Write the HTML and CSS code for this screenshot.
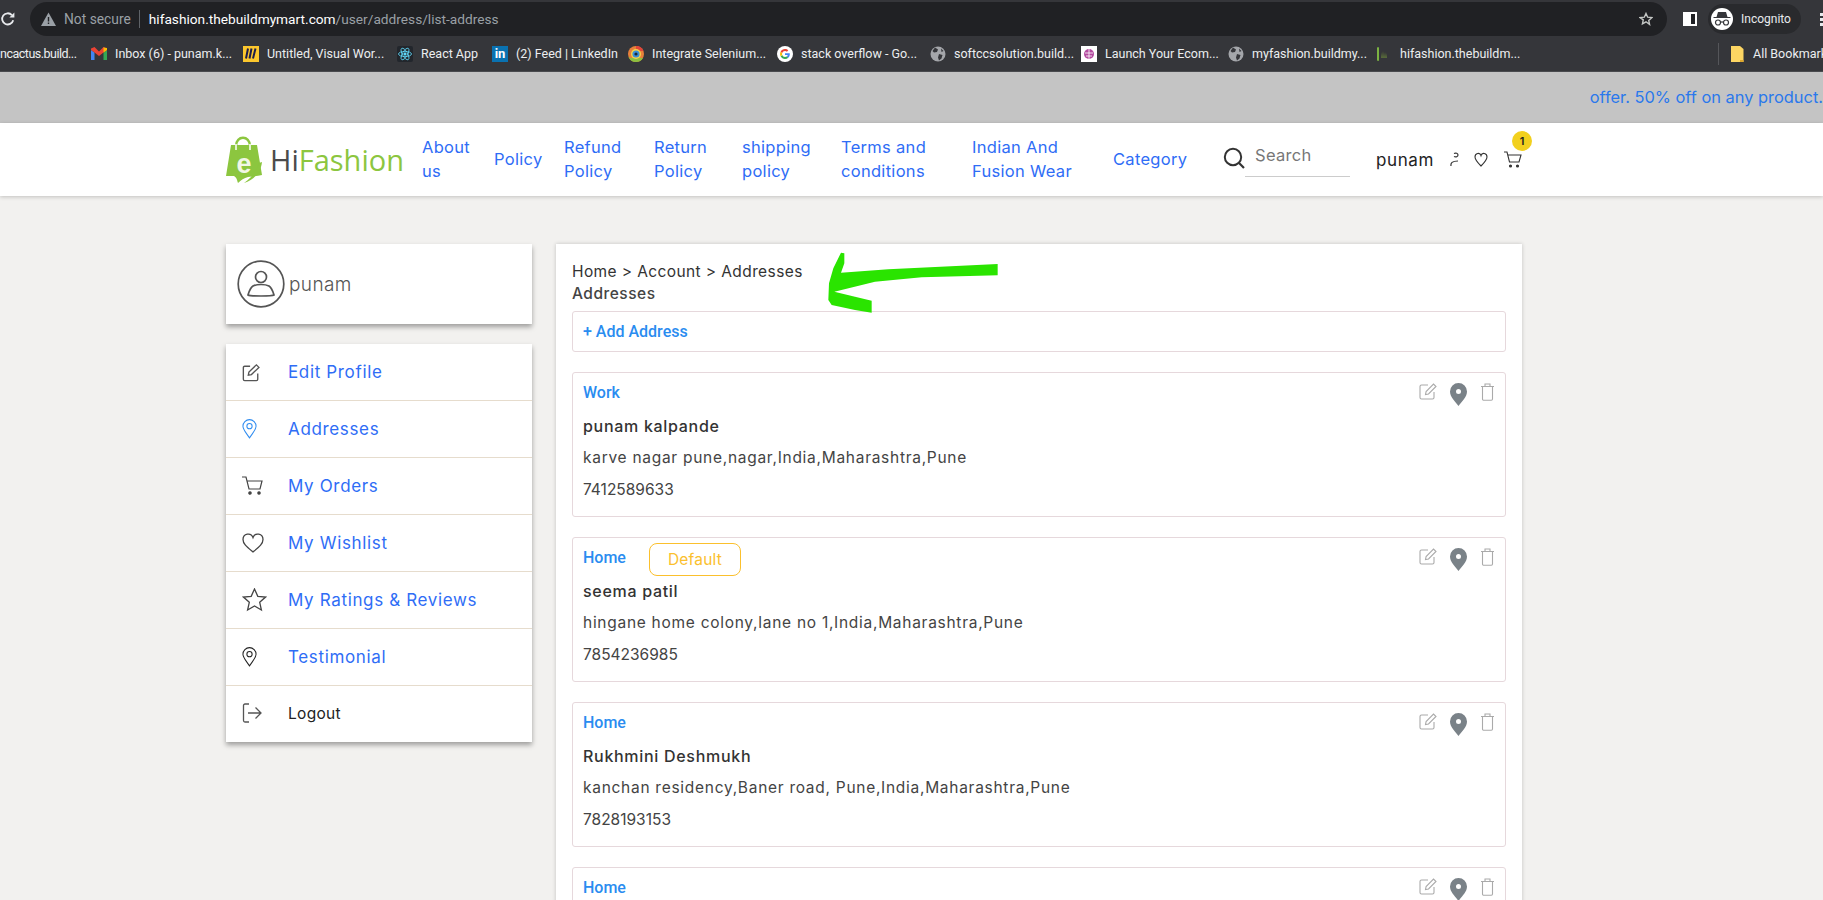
FILE: index.html
```html
<!DOCTYPE html>
<html lang="en">
<head>
    <meta charset="UTF-8">
    <meta name="viewport" content="width=device-width, initial-scale=1.0">
    <title>Addresses</title>
    <link rel="stylesheet" href="styles.css">
</head>
<body>
    <div class="browser-toolbar">
        <svg class="reload-icon" width="16" height="16" viewBox="0 0 16 16"><path d="M13.2 9.2a5.6 5.6 0 1 1-1.3-5.1" fill="none" stroke="#e8eaed" stroke-width="1.8"/><path d="M14.4 1.6v5h-5z" fill="#e8eaed"/></svg>
        <div class="omnibox">
            <svg class="warn-icon" width="15" height="14" viewBox="0 0 15 14"><path d="M7.5 0.5 15 14H0z" fill="#9aa0a6"/><path d="M6.8 5h1.4v4.6H6.8zM6.8 10.6h1.4V12H6.8z" fill="#202124"/></svg>
            <span class="not-secure">Not secure</span>
            <span class="omni-divider"></span>
            <span class="url"><b>hifashion.thebuildmymart.com</b>/user/address/list-address</span>
            <svg class="star-icon" width="14" height="14" viewBox="0 0 24 24"><path d="M12 2.5l2.9 6.4 7 .8-5.200 4.700 1.400 6.900L12 16.800l-6.100 3.500 1.400-6.900L2.100 9.700l7-.8z" fill="none" stroke="#c4c7c5" stroke-width="2.400"/></svg>
        </div>
        <span class="side-panel-icon"></span>
        <div class="incognito-pill">
            <span class="incognito-avatar">
                <svg width="18" height="14" viewBox="0 0 18 14"><path d="M5 0h8l1.500 5h3v1H.5V5h3z" fill="#35363a"/><circle cx="5" cy="10.500" r="2.500" fill="none" stroke="#35363a" stroke-width="1.200"/><circle cx="13" cy="10.500" r="2.500" fill="none" stroke="#35363a" stroke-width="1.200"/><path d="M7.500 10h3" stroke="#35363a" stroke-width="1.200"/></svg>
            </span>
            <span>Incognito</span>
        </div>
        <span class="menu-dots"><i></i><i></i><i></i></span>
    </div>

    <div class="bookmarks">
        <div class="bookmark bookmark-first">ncactus.build...</div>
        <div class="bookmark">
            <svg width="16" height="13" viewBox="0 0 16 13"><path d="M0 3v10h3.500V5.500z" fill="#4285f4"/><path d="M16 3v10h-3.500V5.500z" fill="#34a853"/><path d="M0 1.500 3.500 0 8 4.500 12.500 0 16 1.500V3L12.500 5.500 8 9 3.500 5.500 0 3z" fill="#ea4335"/><path d="M12.500 .5 16 1v2l-3.500 2.500z" fill="#fbbc04"/></svg>
            Inbox (6) - punam.k...
        </div>
        <div class="bookmark">
            <span class="favicon favicon-miro"><svg width="12" height="11" viewBox="0 0 12 11"><path d="M3 0.500 1 10.500M6.500 0.500 4.500 10.500M10.500 0.500 8 10.500" stroke="#1c1c4c" stroke-width="2" fill="none"/></svg></span>
            Untitled, Visual Wor...
        </div>
        <div class="bookmark">
            <span class="favicon favicon-react"><svg width="14" height="14" viewBox="0 0 14 14" fill="none" stroke="#61dafb" stroke-width=".8"><ellipse cx="7" cy="7" rx="6.500" ry="2.600"/><ellipse cx="7" cy="7" rx="6.500" ry="2.600" transform="rotate(60 7 7)"/><ellipse cx="7" cy="7" rx="6.500" ry="2.600" transform="rotate(120 7 7)"/><circle cx="7" cy="7" r="1.200" fill="#61dafb"/></svg></span>
            React App
        </div>
        <div class="bookmark">
            <span class="favicon favicon-linkedin">in</span>
            (2) Feed | LinkedIn
        </div>
        <div class="bookmark">
            <svg width="16" height="16" viewBox="0 0 16 16"><circle cx="8" cy="8" r="8" fill="#e8803a"/><path d="M8 0a8 8 0 0 1 7.500 5H8z" fill="#e0453a"/><path d="M0.500 11A8 8 0 0 0 8 16a8 8 0 0 0 7-4H3z" fill="#8cbf3f"/><circle cx="8" cy="8" r="5" fill="#f3d34a"/><circle cx="8" cy="8" r="3.600" fill="#3a8fd8"/><circle cx="8" cy="8" r="1.600" fill="#1c2b3a"/></svg>
            Integrate Selenium...
        </div>
        <div class="bookmark">
            <svg width="16" height="16" viewBox="0 0 16 16"><circle cx="8" cy="8" r="8" fill="#fff"/><path d="M12.800 8.200c0-.4 0-.7-.1-1H8v1.900h2.700c-.1.700-.5 1.200-1 1.500l1.600 1.200c.9-.9 1.500-2.100 1.500-3.600z" fill="#4285f4"/><path d="M8 13c1.300 0 2.400-.4 3.300-1.200l-1.600-1.200c-.4.300-1 .5-1.700.5-1.300 0-2.400-.9-2.800-2L3.600 10.300C4.400 11.900 6.100 13 8 13z" fill="#34a853"/><path d="M5.200 9.100c-.2-.7-.2-1.500 0-2.200L3.600 5.700c-.7 1.400-.7 3.200 0 4.600z" fill="#fbbc04"/><path d="M8 5c.7 0 1.400.3 1.900.7l1.400-1.400C10.400 3.500 9.300 3 8 3 6.100 3 4.400 4.100 3.600 5.700l1.600 1.200C5.600 5.800 6.700 5 8 5z" fill="#ea4335"/></svg>
            stack overflow - Go...
        </div>
        <div class="bookmark">
            <svg width="16" height="16" viewBox="0 0 16 16"><circle cx="8" cy="8" r="7.500" fill="#a4a6aa"/><path d="M5 1.500 8 3.500 7 6 4 6.500 2.500 5zM9 8l3.500 1-1 3.500-2.500 2-1-3zM11 2.500l2.500 2.500-2 1z" fill="#35363a"/></svg>
            softccsolution.build...
        </div>
        <div class="bookmark">
            <span class="favicon favicon-launch"><svg width="12" height="12" viewBox="0 0 12 12"><circle cx="6" cy="6" r="5" fill="#b44aa0"/><path d="M2 5h8M3 8h6M6 1v10" stroke="#fff" stroke-width=".8"/></svg></span>
            Launch Your Ecom...
        </div>
        <div class="bookmark">
            <svg width="16" height="16" viewBox="0 0 16 16"><circle cx="8" cy="8" r="7.500" fill="#a4a6aa"/><path d="M5 1.500 8 3.500 7 6 4 6.500 2.500 5zM9 8l3.500 1-1 3.500-2.500 2-1-3zM11 2.500l2.500 2.500-2 1z" fill="#35363a"/></svg>
            myfashion.buildmy...
        </div>
        <div class="bookmark bookmark-last">
            <svg width="16" height="16" viewBox="0 0 16 16"><path d="M1 1.500c1-.5 1.500-.5 2 0v13c-.5.5-1 .5-2 0z" fill="#7cb342"/><path d="M5 6l1 5 1-6 1 6 1-5 1 5 1-4v5H5z" fill="#55663a"/></svg>
            hifashion.thebuildm...
        </div>
        <div class="bookmarks-end">
            <svg width="13" height="16" viewBox="0 0 13 16"><path d="M0 0h9l3.500 3v13H0z" fill="#fdd663"/><path d="M9 14h3.500v2H9z" fill="#e0a92e"/></svg>
            All Bookmarks
        </div>
    </div>

    <div class="offer-bar">offer. 50% off on any product.</div>

    <header class="site-header">
        <a class="logo" href="#">
            <svg width="37" height="48" viewBox="0 0 37 48">
                <path d="M10 10C10 -1 24 -1 24 10" fill="none" stroke="#8cc63f" stroke-width="2.400"/>
                <path d="M5 9h26l5 30c-4 1-9 1-14 2-4 1-7 3-10 6-1-3-1-5-4-7l-8 0z" fill="#8cc63f"/>
                <path d="M10 8v6M24 8v6" stroke="#fff" stroke-width="1.500"/>
                <path d="M36 26C35 36 28 44 18 47 25 42 30 36 33 27z" fill="#8cc63f"/>
                <text x="18" y="37" class="logo-e">e</text>
            </svg>
            <span class="logo-text"><span class="logo-hi">Hi</span>Fashion</span>
        </a>
        <nav class="main-nav">
            <a class="nav-about" href="#">About us</a>
            <a class="nav-policy" href="#">Policy</a>
            <a class="nav-refund" href="#">Refund Policy</a>
            <a class="nav-return" href="#">Return Policy</a>
            <a class="nav-shipping" href="#">shipping policy</a>
            <a class="nav-terms" href="#">Terms and conditions</a>
            <a class="nav-indian" href="#">Indian And Fusion Wear</a>
            <a class="nav-category" href="#">Category</a>
        </nav>
        <svg class="search-icon" width="22" height="22" viewBox="0 0 22 22"><circle cx="10" cy="10" r="8.200" fill="none" stroke="#333" stroke-width="2"/><path d="M15.800 15.800 21 21" stroke="#333" stroke-width="2.200"/></svg>
        <div class="search-box">Search</div>
        <span class="header-user">punam</span>
        <svg class="mini-user" width="9" height="15" viewBox="0 0 9 15" fill="none" stroke="#333" stroke-width="1.200"><path d="M4 1.500c2-1 4 0 4 1.500s-2 2.500-4 1.500"/><path d="M1 14c-.5-3 1-5 7-5"/></svg>
        <svg class="mini-heart" width="14" height="15" viewBox="0 0 14 15"><path d="M7 14C3 10 1 8 1 5c0-4 5-5 6-1.500C8 0 13 1 13 5c0 3-2 5-6 9z" fill="none" stroke="#333" stroke-width="1.100"/></svg>
        <span class="cart-wrap">
            <svg width="18" height="19" viewBox="0 0 18 19" fill="none" stroke="#333" stroke-width="1.100"><path d="M0 2h3l2.500 10h9.500L17 5H4"/><circle cx="6.500" cy="16" r="1" fill="#333"/><circle cx="13.500" cy="16" r="1" fill="#333"/></svg>
            <span class="cart-badge">1</span>
        </span>
    </header>

    <main class="account-page">
        <aside class="sidebar">
            <div class="profile-card">
                <svg width="48" height="48" viewBox="0 0 48 48" fill="none" stroke="#555" stroke-width="1.700">
                    <circle cx="24" cy="24" r="22.800"/>
                    <circle cx="24" cy="17" r="5.500"/>
                    <path d="M16 26c4-2 12-2 16 0 3 2 4 6 5 9-2 1.300-24 1.300-26 0 1-3 2-7 5-9z"/>
                </svg>
                <span>punam</span>
            </div>
            <ul class="side-menu">
                <li>
                    <svg width="18" height="19" viewBox="0 0 20 20" fill="none" stroke="#555" stroke-width="1.500"><path d="M9 3H3a1.500 1.500 0 0 0-1.500 1.500v13A1.500 1.500 0 0 0 3 19h13a1.500 1.500 0 0 0 1.500-1.500V11"/><path d="M7 13l.7-3.500L16 1.500l2.800 2.800-8.300 8z"/></svg>
                    <a href="#">Edit Profile</a>
                </li>
                <li>
                    <svg width="15" height="20" viewBox="1 0 16 21" fill="none" stroke="#2f8cf0" stroke-width="1.100"><path d="M9 20C5 14 2 11 2 7.500a7 7 0 0 1 14 0C16 11 13 14 9 20z"/><circle cx="9" cy="7.500" r="2.800"/></svg>
                    <a href="#">Addresses</a>
                </li>
                <li>
                    <svg width="22" height="20" viewBox="0 0 22 20" fill="none" stroke="#444" stroke-width="1.200"><path d="M0 1h4l3 12h11l2-8H5"/><circle cx="8" cy="17" r="1.200" fill="#444"/><circle cx="17" cy="17" r="1.200" fill="#444"/></svg>
                    <a href="#">My Orders</a>
                </li>
                <li>
                    <svg width="22" height="20" viewBox="0 0 22 20" fill="none" stroke="#444" stroke-width="1.300"><path d="M11 19C5 14 1 11 1 6.500 1 .5 9-1 11 4.500 13-1 21 .5 21 6.500 21 11 17 14 11 19z"/></svg>
                    <a href="#">My Wishlist</a>
                </li>
                <li>
                    <svg width="25" height="24" viewBox="0 0 25 24" fill="none" stroke="#444" stroke-width="1.300"><path d="M12.500 1l3.300 7.300 7.700.8-5.800 5.200 1.700 7.700-6.900-4-6.900 4 1.700-7.700L1.500 9.100l7.700-.8z"/></svg>
                    <a href="#">My Ratings &amp; Reviews</a>
                </li>
                <li>
                    <svg width="15" height="20" viewBox="1 0 16 21" fill="none" stroke="#222" stroke-width="1.100"><path d="M9 20C5 14 2 11 2 7.500a7 7 0 0 1 14 0C16 11 13 14 9 20z"/><circle cx="9" cy="7.500" r="2.800"/></svg>
                    <a href="#">Testimonial</a>
                </li>
                <li class="logout">
                    <svg width="20" height="20" viewBox="0 0 20 20" fill="none" stroke="#555" stroke-width="1.300"><path d="M7 1H3a1.500 1.500 0 0 0-1.500 1.500v15A1.500 1.500 0 0 0 3 19h4"/><path d="M6 10h13M13.500 4.500 19 10l-5.500 5.500"/></svg>
                    <a href="#">Logout</a>
                </li>
            </ul>
        </aside>

        <section class="address-panel">
            <svg class="scribble-arrow" width="180" height="70" viewBox="810 30 540 210"><path d="M858 38 868 40 868 70 858 98 1000 88 1328 72 1328 106 1100 112 960 125 838 155 900 170 950 182 950 218 900 210 830 195 820 180 822 130 835 85z" fill="#2ae400"/></svg>
            <div class="breadcrumb">Home &gt; Account &gt; Addresses</div>
            <h2 class="panel-title">Addresses</h2>
            <a class="add-address" href="#">+ Add Address</a>

            <article class="address-card">
                <div class="card-head"><span class="address-type">Work</span></div>
                <div class="card-actions">
                    <svg width="18" height="18" viewBox="0 0 18 18" fill="none" stroke="#aaa" stroke-width="1.100"><path d="M9 2H2.500A1.500 1.500 0 0 0 1 3.500v11A1.500 1.500 0 0 0 2.500 16h11a1.500 1.500 0 0 0 1.500-1.500V9"/><path d="M6.500 11.500l.6-3L14.500 1 17 3.500 9.500 11z"/></svg>
                    <svg width="17" height="23" viewBox="0 0 17 23"><path fill-rule="evenodd" d="M8.500 0a8.500 8.500 0 0 1 8.500 8.500C17 14 12 18 8.500 23 5 18 0 14 0 8.500A8.500 8.500 0 0 1 8.500 0zm0 6a2.500 2.500 0 1 0 0 5 2.500 2.500 0 0 0 0-5z" fill="#7a8288"/></svg>
                    <svg width="15" height="18" viewBox="0 0 15 18" fill="none" stroke="#aaa" stroke-width="1.100"><path d="M1 3.500h13M5 3.500V1h5v2.500M2.500 3.500V16a1.200 1.200 0 0 0 1.200 1.200h7.600a1.200 1.200 0 0 0 1.200-1.200V3.500"/></svg>
                </div>
                <div class="person-name">punam kalpande</div>
                <div class="address-line">karve nagar pune,nagar,India,Maharashtra,Pune</div>
                <div class="phone-line">7412589633</div>
            </article>

            <article class="address-card">
                <div class="card-head"><span class="address-type">Home</span><span class="default-badge">Default</span></div>
                <div class="card-actions">
                    <svg width="18" height="18" viewBox="0 0 18 18" fill="none" stroke="#aaa" stroke-width="1.100"><path d="M9 2H2.500A1.500 1.500 0 0 0 1 3.500v11A1.500 1.500 0 0 0 2.500 16h11a1.500 1.500 0 0 0 1.500-1.500V9"/><path d="M6.500 11.500l.6-3L14.500 1 17 3.500 9.500 11z"/></svg>
                    <svg width="17" height="23" viewBox="0 0 17 23"><path fill-rule="evenodd" d="M8.500 0a8.500 8.500 0 0 1 8.500 8.500C17 14 12 18 8.500 23 5 18 0 14 0 8.500A8.500 8.500 0 0 1 8.500 0zm0 6a2.500 2.500 0 1 0 0 5 2.500 2.500 0 0 0 0-5z" fill="#7a8288"/></svg>
                    <svg width="15" height="18" viewBox="0 0 15 18" fill="none" stroke="#aaa" stroke-width="1.100"><path d="M1 3.500h13M5 3.500V1h5v2.500M2.500 3.500V16a1.200 1.200 0 0 0 1.200 1.200h7.600a1.200 1.200 0 0 0 1.200-1.200V3.500"/></svg>
                </div>
                <div class="person-name">seema patil</div>
                <div class="address-line">hingane home colony,lane no 1,India,Maharashtra,Pune</div>
                <div class="phone-line">7854236985</div>
            </article>

            <article class="address-card">
                <div class="card-head"><span class="address-type">Home</span></div>
                <div class="card-actions">
                    <svg width="18" height="18" viewBox="0 0 18 18" fill="none" stroke="#aaa" stroke-width="1.100"><path d="M9 2H2.500A1.500 1.500 0 0 0 1 3.500v11A1.500 1.500 0 0 0 2.500 16h11a1.500 1.500 0 0 0 1.500-1.500V9"/><path d="M6.500 11.500l.6-3L14.500 1 17 3.500 9.500 11z"/></svg>
                    <svg width="17" height="23" viewBox="0 0 17 23"><path fill-rule="evenodd" d="M8.500 0a8.500 8.500 0 0 1 8.500 8.500C17 14 12 18 8.500 23 5 18 0 14 0 8.500A8.500 8.500 0 0 1 8.500 0zm0 6a2.500 2.500 0 1 0 0 5 2.500 2.500 0 0 0 0-5z" fill="#7a8288"/></svg>
                    <svg width="15" height="18" viewBox="0 0 15 18" fill="none" stroke="#aaa" stroke-width="1.100"><path d="M1 3.500h13M5 3.500V1h5v2.500M2.500 3.500V16a1.200 1.200 0 0 0 1.200 1.200h7.600a1.200 1.200 0 0 0 1.200-1.200V3.500"/></svg>
                </div>
                <div class="person-name">Rukhmini Deshmukh</div>
                <div class="address-line">kanchan residency,Baner road, Pune,India,Maharashtra,Pune</div>
                <div class="phone-line">7828193153</div>
            </article>

            <article class="address-card">
                <div class="card-head"><span class="address-type">Home</span></div>
                <div class="card-actions">
                    <svg width="18" height="18" viewBox="0 0 18 18" fill="none" stroke="#aaa" stroke-width="1.100"><path d="M9 2H2.500A1.500 1.500 0 0 0 1 3.500v11A1.500 1.500 0 0 0 2.500 16h11a1.500 1.500 0 0 0 1.500-1.500V9"/><path d="M6.500 11.500l.6-3L14.500 1 17 3.500 9.500 11z"/></svg>
                    <svg width="17" height="23" viewBox="0 0 17 23"><path fill-rule="evenodd" d="M8.500 0a8.500 8.500 0 0 1 8.500 8.500C17 14 12 18 8.500 23 5 18 0 14 0 8.500A8.500 8.500 0 0 1 8.500 0zm0 6a2.500 2.500 0 1 0 0 5 2.500 2.500 0 0 0 0-5z" fill="#7a8288"/></svg>
                    <svg width="15" height="18" viewBox="0 0 15 18" fill="none" stroke="#aaa" stroke-width="1.100"><path d="M1 3.500h13M5 3.500V1h5v2.500M2.500 3.500V16a1.200 1.200 0 0 0 1.200 1.200h7.600a1.200 1.200 0 0 0 1.200-1.200V3.500"/></svg>
                </div>
            </article>
        </section>
    </main>
</body>
</html>
```

FILE: styles.css
```css
html, body {
    height: 900px;
    overflow: hidden;
}
body {
    font-family: Inter, "Liberation Sans", sans-serif;
    margin: 0;
    padding: 0;
    background: #f2f1ef;
    color: #333;
}
a {
    text-decoration: none;
    color: inherit;
}

/* browser chrome */
.browser-toolbar {
    display: flex;
    align-items: center;
    box-sizing: border-box;
    height: 36px;
    padding-top: 2px;
    background: #35363a;
    color: #e8eaed;
    font-family: "Noto Sans", sans-serif;
    font-size: 12px;
}
.reload-icon {
    flex: none;
    margin-right: 14px;
}
.omnibox {
    display: flex;
    align-items: center;
    box-sizing: border-box;
    width: 1637px;
    height: 34px;
    padding: 0 14px 0 11px;
    border-radius: 17px;
    background: #202124;
    font-family: Roboto, sans-serif;
    font-size: 14px;
}
.not-secure {
    margin-left: 8px;
    color: #9aa0a6;
    font-size: 13.8px;
}
.omni-divider {
    width: 1px;
    height: 18px;
    margin: 0 9px 0 8px;
    background: #5f6368;
}
.url {
    flex: 1;
    color: #9aa0a6;
    font-size: 13.7px;
}
.url b {
    font-weight: 400;
    color: #fff;
}
.side-panel-icon {
    box-sizing: border-box;
    width: 14px;
    height: 14px;
    margin-left: 16px;
    border: 2px solid #fff;
    border-left-width: 8px;
    background: #202124;
}
.incognito-pill {
    display: flex;
    align-items: center;
    gap: 8px;
    box-sizing: border-box;
    width: 93px;
    height: 30px;
    margin-left: 11px;
    padding-left: 3px;
    border-radius: 15px;
    background: #292a2d;
    font-family: Roboto, sans-serif;
}
.incognito-avatar {
    display: flex;
    align-items: center;
    justify-content: center;
    width: 22px;
    height: 22px;
    border-radius: 50%;
    background: #fff;
}
.menu-dots {
    display: flex;
    flex-direction: column;
    gap: 2px;
    margin-left: 19px;
}
.menu-dots i {
    width: 3px;
    height: 3px;
    background: #e8eaed;
}

.bookmarks {
    display: grid;
    grid-template-columns: 91px 152px 154px 95px 136px 149px 153px 151px 147px 148px 342px 1fr;
    align-items: center;
    box-sizing: border-box;
    height: 36px;
    border-bottom: 1px solid #4a4b4f;
    background: #35363a;
    color: #eceef0;
    font-family: Roboto, sans-serif;
    font-size: 12.5px;
    white-space: nowrap;
    overflow: hidden;
}
.bookmark {
    display: flex;
    align-items: center;
    gap: 8px;
}
.bookmark-first {
    letter-spacing: -0.5px;
}
.bookmarks-end {
    display: flex;
    align-items: center;
    gap: 9px;
    height: 22px;
    padding-left: 12px;
    border-left: 1px solid #55565a;
}
.favicon {
    display: flex;
    align-items: center;
    justify-content: center;
    flex: none;
    width: 16px;
    height: 16px;
}
.favicon-miro {
    background: #fcc72d;
}
.favicon-react {
    background: #22262c;
    border-radius: 2px;
}
.favicon-linkedin {
    background: #0a72b1;
    color: #fff;
    font-size: 13px;
    font-weight: 700;
}
.favicon-launch {
    background: #fff;
}

/* site header */
.offer-bar {
    display: flex;
    align-items: center;
    justify-content: flex-end;
    box-sizing: border-box;
    height: 51px;
    padding-bottom: 2px;
    background: #c4c4c4;
    color: #2a78ec;
    font-size: 16.4px;
    white-space: nowrap;
}
.site-header {
    position: relative;
    display: flex;
    align-items: center;
    box-sizing: border-box;
    height: 73px;
    padding-left: 226px;
    background: #fff;
    box-shadow: 0 1px 4px rgba(0, 0, 0, 0.2);
}
.logo {
    display: flex;
    align-items: center;
    width: 196px;
    flex: none;
    color: #8cc63f;
}
.logo-text {
    margin-left: 7px;
    font-family: "Open Sans", sans-serif;
    font-size: 29px;
    line-height: 40px;
}
.logo-hi {
    color: #4b4b4b;
}
.logo-e {
    font-family: "Liberation Sans", sans-serif;
    font-size: 27px;
    font-weight: 700;
    fill: #f1f7e6;
    text-anchor: middle;
}
.main-nav {
    display: flex;
    align-items: center;
    flex: none;
    padding-bottom: 2px;
    color: #2f6df6;
    font-size: 16.5px;
    letter-spacing: 0.3px;
    line-height: 24px;
}
.main-nav a {
    display: block;
}
.nav-about { width: 72px; padding-right: 20px; box-sizing: border-box; }
.nav-policy { width: 70px; }
.nav-refund { width: 90px; padding-right: 20px; box-sizing: border-box; }
.nav-return { width: 88px; padding-right: 20px; box-sizing: border-box; }
.nav-shipping { width: 99px; padding-right: 20px; box-sizing: border-box; }
.nav-terms { width: 131px; padding-right: 20px; box-sizing: border-box; }
.nav-indian { width: 141px; padding-right: 20px; box-sizing: border-box; }
.nav-category { width: 110px; }
.search-icon {
    flex: none;
    margin-bottom: 3px;
}
.search-box {
    box-sizing: border-box;
    width: 105px;
    height: 35px;
    padding: 1px 0 0 10px;
    border-bottom: 1px solid #ccc;
    color: #777;
    font-size: 16.5px;
    letter-spacing: 0.3px;
    line-height: 24px;
}
.header-user {
    margin-left: 26px;
    font-size: 17px;
    letter-spacing: 0.6px;
    color: #222;
}
.mini-user {
    margin-left: 16px;
}
.mini-heart {
    margin-left: 15px;
}
.cart-wrap {
    position: relative;
    display: block;
    height: 19px;
    margin-left: 16px;
}
.cart-badge {
    position: absolute;
    left: 8px;
    top: -19px;
    width: 20px;
    height: 20px;
    border-radius: 50%;
    background: #f2d01e;
    color: #222;
    font-size: 11px;
    font-weight: 600;
    line-height: 20px;
    text-align: center;
}

/* account page */
.account-page {
    display: flex;
    align-items: flex-start;
    gap: 24px;
    padding: 48px 0 0 226px;
}
.sidebar {
    display: flex;
    flex-direction: column;
    gap: 20px;
    width: 306px;
    flex: none;
}
.profile-card {
    display: flex;
    align-items: center;
    gap: 4px;
    box-sizing: border-box;
    height: 80px;
    padding: 0 0 0 11px;
    background: #fff;
    box-shadow: 0 3px 5px rgba(0, 0, 0, 0.35);
    color: #555;
    font-size: 19px;
    font-weight: 300;
    letter-spacing: 0.4px;
}
.side-menu {
    margin: 0;
    padding: 0;
    list-style: none;
    background: #fff;
    box-shadow: 0 3px 5px rgba(0, 0, 0, 0.35);
}
.side-menu li {
    display: grid;
    grid-template-columns: 46px 1fr;
    align-items: center;
    box-sizing: border-box;
    height: 57px;
    padding-left: 16px;
    border-bottom: 1px solid #e6dccd;
    color: #2f6df6;
    font-size: 17px;
    letter-spacing: 0.65px;
}
.side-menu .logout {
    height: 56px;
    padding-bottom: 2px;
    border-bottom: none;
    color: #222;
    font-size: 15.5px;
    letter-spacing: 0.3px;
}
.address-panel {
    position: relative;
    box-sizing: border-box;
    width: 966px;
    height: 700px;
    padding: 17px 16px 0;
    background: #fff;
    box-shadow: 0 0 4px rgba(0, 0, 0, 0.2);
}
.scribble-arrow {
    position: absolute;
    left: 269px;
    top: 6px;
}
.breadcrumb {
    color: #333;
    font-size: 15.5px;
    letter-spacing: 0.4px;
    line-height: 22px;
}
.panel-title {
    margin: 0 0 6px;
    color: #444;
    font-size: 15.5px;
    font-weight: 500;
    letter-spacing: 0.5px;
    line-height: 22px;
}
.add-address {
    display: flex;
    align-items: center;
    box-sizing: border-box;
    height: 41px;
    margin-bottom: 20px;
    padding-left: 10px;
    border: 1px solid #e6d8dc;
    border-radius: 3px;
    color: #2a8cf0;
    font-family: Roboto, sans-serif;
    font-size: 16px;
    font-weight: 500;
}
.address-card {
    position: relative;
    box-sizing: border-box;
    height: 145px;
    margin-bottom: 20px;
    padding: 10px 10px 0;
    border: 1px solid #e6d8dc;
    border-radius: 3px;
}
.card-head {
    display: flex;
    height: 22px;
    margin-bottom: 10px;
}
.address-type {
    color: #2a8cf0;
    font-family: Roboto, sans-serif;
    font-size: 16px;
    font-weight: 500;
    line-height: 20px;
}
.default-badge {
    box-sizing: border-box;
    height: 33px;
    margin: -5px 0 0 23px;
    padding: 0 18px;
    border: 1px solid #fbc02d;
    border-radius: 8px;
    color: #fbc02d;
    font-size: 15.5px;
    letter-spacing: 0.2px;
    line-height: 31px;
}
.card-actions {
    position: absolute;
    top: 10px;
    right: 10px;
    display: flex;
    align-items: flex-start;
    gap: 13px;
}
.person-name {
    color: #333;
    font-size: 16px;
    font-weight: 500;
    letter-spacing: 0.7px;
    line-height: 22px;
    margin-bottom: 10px;
}
.address-line {
    color: #444;
    font-size: 15.5px;
    letter-spacing: 0.72px;
    line-height: 22px;
    margin-bottom: 10px;
}
.phone-line {
    color: #444;
    font-size: 15.5px;
    line-height: 22px;
}
```
